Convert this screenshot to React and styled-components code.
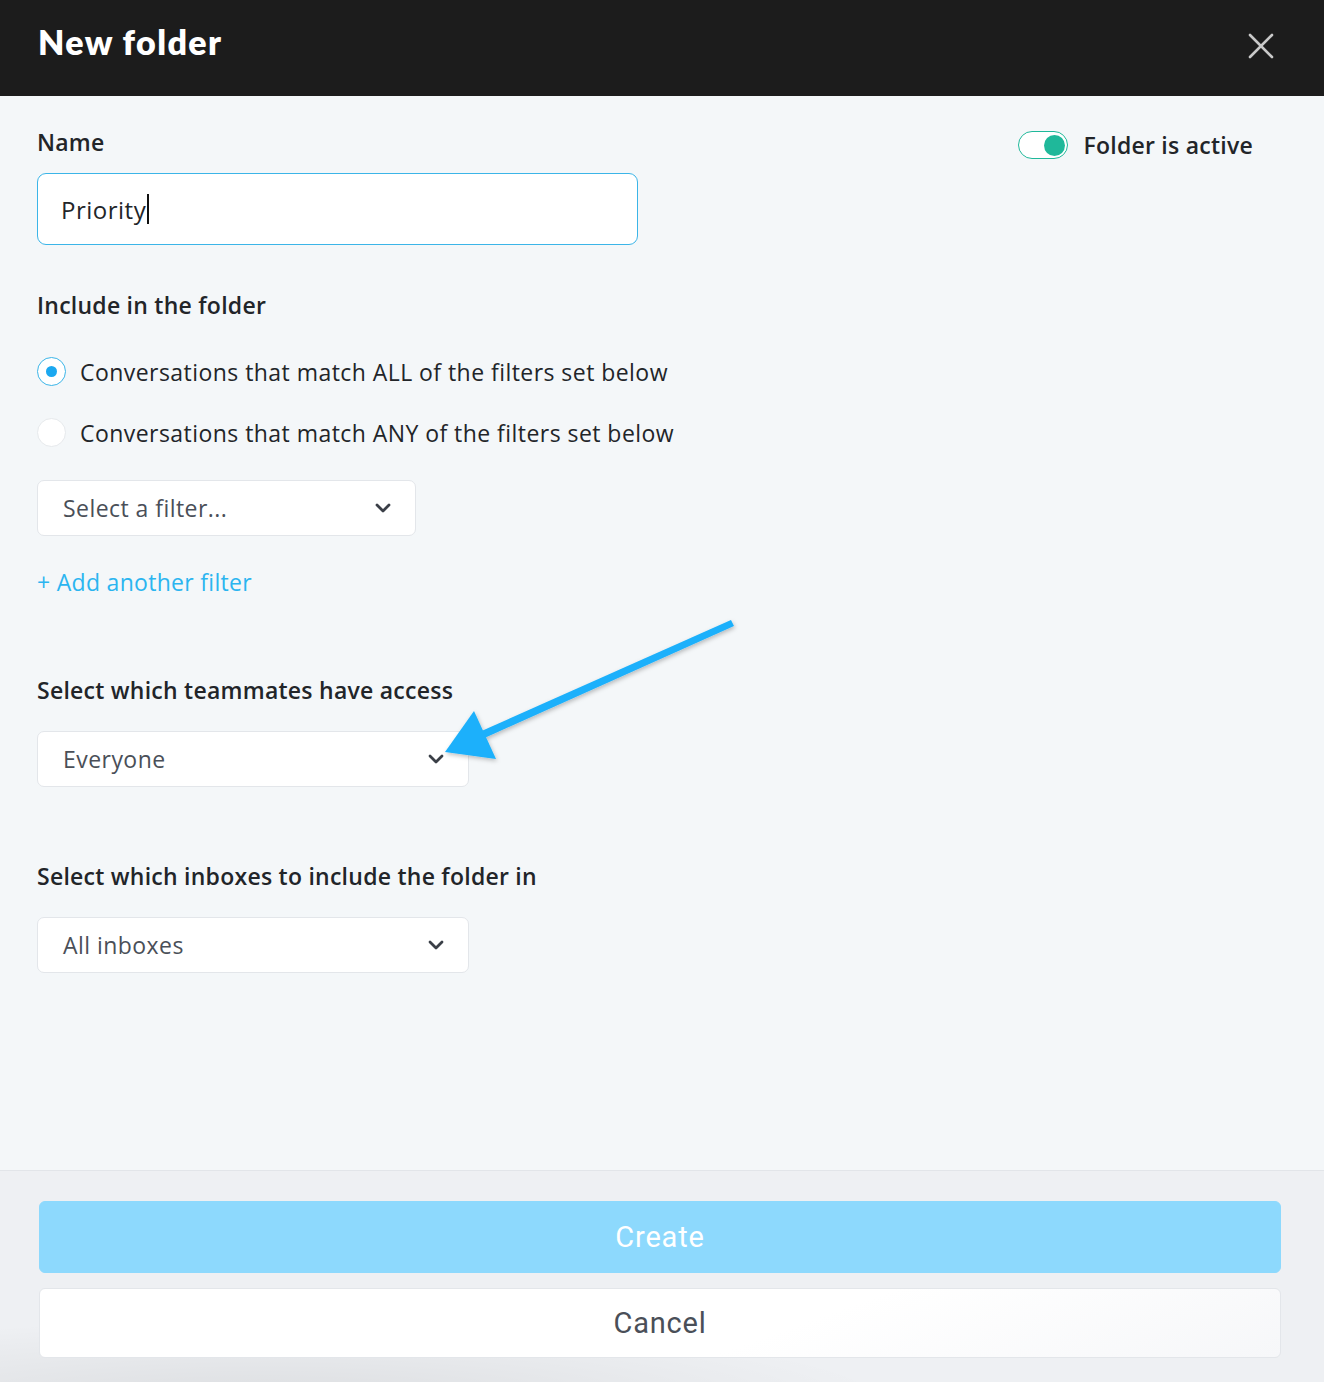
import styled, { createGlobalStyle } from "styled-components"

const GlobalStyle = createGlobalStyle`
  * { box-sizing: border-box; }
  body {
    margin: 0;
    font-family: "Open Sans", Lato, sans-serif;
    color: #222529;
  }
`

const Modal = styled.div`
  width: 1324px;
  height: 1382px;
  display: flex;
  flex-direction: column;
  background: #f4f7f9;
  position: relative;
  overflow: hidden;
`

const Header = styled.header`
  height: 96px;
  flex-shrink: 0;
  background: #1c1c1c;
  display: flex;
  align-items: center;
  justify-content: space-between;
  padding: 0 50px 0 38px;
`

const Title = styled.h1`
  margin: 0;
  color: #fff;
  font-family: Lato, sans-serif;
  font-size: 34px;
  font-weight: 800;
  letter-spacing: 1.4px;
  margin-top: -14px;
`

const CloseButton = styled.button`
  border: none;
  background: none;
  padding: 0;
  width: 26px;
  height: 26px;
  cursor: pointer;
  margin-top: -4px;
`

const Body = styled.main`
  flex: 1;
  padding: 32px 37px 0 37px;
  display: flex;
  flex-direction: column;
`

const TopRow = styled.div`
  display: flex;
  justify-content: space-between;
  align-items: flex-start;
`

const Field = styled.div`
  display: flex;
  flex-direction: column;
`

const Label = styled.label`
  font-size: 23px;
  font-weight: 600;
  letter-spacing: 0.25px;
  color: #222529;
  line-height: 28px;
  margin-bottom: ${(p) => p.$gap || 16}px;
`

const ToggleWrap = styled.div`
  display: flex;
  align-items: center;
  gap: 15px;
  margin-right: 34px;
  margin-top: 3px;
  font-size: 23px;
  font-weight: 600;
  letter-spacing: 0.25px;
  line-height: 28px;
  color: #222529;
`

const Toggle = styled.div`
  width: 50px;
  height: 28px;
  border-radius: 14px;
  border: 1.5px solid #1fb89a;
  background: #fff;
  display: flex;
  align-items: center;
  justify-content: flex-end;
  padding: 2px;
`

const Knob = styled.div`
  width: 21px;
  height: 21px;
  border-radius: 50%;
  background: #1fb89a;
`

const TextInput = styled.div`
  width: 601px;
  height: 72px;
  background: #fff;
  border: 1px solid #3bb5e8;
  border-radius: 9px;
  display: flex;
  align-items: center;
  padding-left: 23px;
  font-size: 24px;
  color: #222529;
  letter-spacing: 0.5px;
`

const Caret = styled.span`
  display: inline-block;
  width: 2px;
  height: 30px;
  background: #111;
  margin-left: 1px;
`

const Section = styled.section`
  margin-top: ${(p) => p.$top}px;
  display: flex;
  flex-direction: column;
`

const RadioList = styled.div`
  display: flex;
  flex-direction: column;
  gap: 32px;
  margin-top: 22px;
`

const RadioRow = styled.div`
  display: flex;
  align-items: center;
  gap: 14px;
  font-size: 23px;
  color: #222529;
  letter-spacing: 0.45px;
  line-height: 28px;
`

const RadioDot = styled.span`
  width: 29px;
  height: 29px;
  border-radius: 50%;
  background: #fff;
  border: 1px solid ${(p) => (p.$checked ? "#3bb5e8" : "#e6e9ec")};
  display: flex;
  align-items: center;
  justify-content: center;
  &::after {
    content: "";
    width: 11px;
    height: 11px;
    border-radius: 50%;
    background: ${(p) => (p.$checked ? "#1ba8f0" : "transparent")};
  }
`

const Select = styled.div`
  width: ${(p) => p.$width}px;
  height: 56px;
  background: #fff;
  border: 1px solid #e3e6ea;
  border-radius: 7px;
  display: flex;
  align-items: center;
  justify-content: space-between;
  padding: 0 24px 0 25px;
  font-size: 23px;
  line-height: 28px;
  color: #4a4f58;
  letter-spacing: 0.45px;
`

const AddLink = styled.a`
  margin-top: 32px;
  font-size: 23px;
  line-height: 28px;
  color: #2bb5f0;
  letter-spacing: 0.3px;
  text-decoration: none;
  cursor: pointer;
`

const Footer = styled.footer`
  height: 212px;
  flex-shrink: 0;
  border-top: 1px solid #e2e5e9;
  background:
    radial-gradient(ellipse 900px 120px at 20% 110%, rgba(0, 0, 0, 0.08), transparent 70%),
    #eef0f3;
  padding: 30px 43px 24px 39px;
  display: flex;
  flex-direction: column;
  gap: 15px;
`

const Button = styled.button`
  height: ${(p) => p.$height}px;
  width: 100%;
  border-radius: 6px;
  font-family: Roboto, Lato, sans-serif;
  font-size: 29px;
  letter-spacing: 0.8px;
  cursor: pointer;
  border: 1px solid ${(p) => (p.$primary ? "#8dd9fd" : "#e3e6ea")};
  background: ${(p) =>
    p.$primary ? "#8dd9fd" : "linear-gradient(160deg, #ffffff 60%, #f6f7f9 100%)"};
  color: ${(p) => (p.$primary ? "#ffffff" : "#4a4f58")};
`

const Arrow = styled.svg`
  position: absolute;
  left: 0;
  top: 0;
  pointer-events: none;
`

function Chevron() {
  return (
    <svg width="16" height="10" viewBox="0 0 16 10">
      <path d="M2 2 L8 8 L14 2" fill="none" stroke="#3a3f47" strokeWidth="2.8" strokeLinecap="round" strokeLinejoin="round" />
    </svg>
  )
}

export default function App() {
  return (
    <>
      <GlobalStyle />
      <Modal>
        <Header>
          <Title>New folder</Title>
          <CloseButton aria-label="Close">
            <svg width="26" height="26" viewBox="0 0 26 26">
              <path d="M2 2 L24 24 M24 2 L2 24" stroke="#c9c9c9" strokeWidth="2.6" strokeLinecap="round" />
            </svg>
          </CloseButton>
        </Header>
        <Body>
          <TopRow>
            <Field>
              <Label $gap={17}>Name</Label>
              <TextInput>
                Priority<Caret />
              </TextInput>
            </Field>
            <ToggleWrap>
              <Toggle>
                <Knob />
              </Toggle>
              Folder is active
            </ToggleWrap>
          </TopRow>

          <Section $top={46}>
            <Label $gap={0}>Include in the folder</Label>
            <RadioList>
              <RadioRow>
                <RadioDot $checked />
                Conversations that match ALL of the filters set below
              </RadioRow>
              <RadioRow>
                <RadioDot />
                Conversations that match ANY of the filters set below
              </RadioRow>
            </RadioList>
          </Section>

          <Section $top={33}>
            <Select $width={379}>
              Select a filter...
              <Chevron />
            </Select>
            <AddLink>+ Add another filter</AddLink>
          </Section>

          <Section $top={80}>
            <Label $gap={27}>Select which teammates have access</Label>
            <Select $width={432}>
              Everyone
              <Chevron />
            </Select>
          </Section>

          <Section $top={75}>
            <Label $gap={27}>Select which inboxes to include the folder in</Label>
            <Select $width={432}>
              All inboxes
              <Chevron />
            </Select>
          </Section>
        </Body>
        <Footer>
          <Button $primary $height={72}>Create</Button>
          <Button $height={71}>Cancel</Button>
        </Footer>

        <Arrow width="1324" height="1382" viewBox="0 0 1324 1382">
          <defs>
            <filter id="arrowShadow" x="-20%" y="-20%" width="140%" height="140%">
              <feDropShadow dx="1" dy="2" stdDeviation="2" floodColor="#000" floodOpacity="0.25" />
            </filter>
          </defs>
          <g filter="url(#arrowShadow)" fill="#1bb0fb">
            <path d="M731 620 L734 626 L480 740 L477 733 Z" />
            <path d="M445 752 L474 711 L496 759 Z" />
          </g>
        </Arrow>
      </Modal>
    </>
  )
}
